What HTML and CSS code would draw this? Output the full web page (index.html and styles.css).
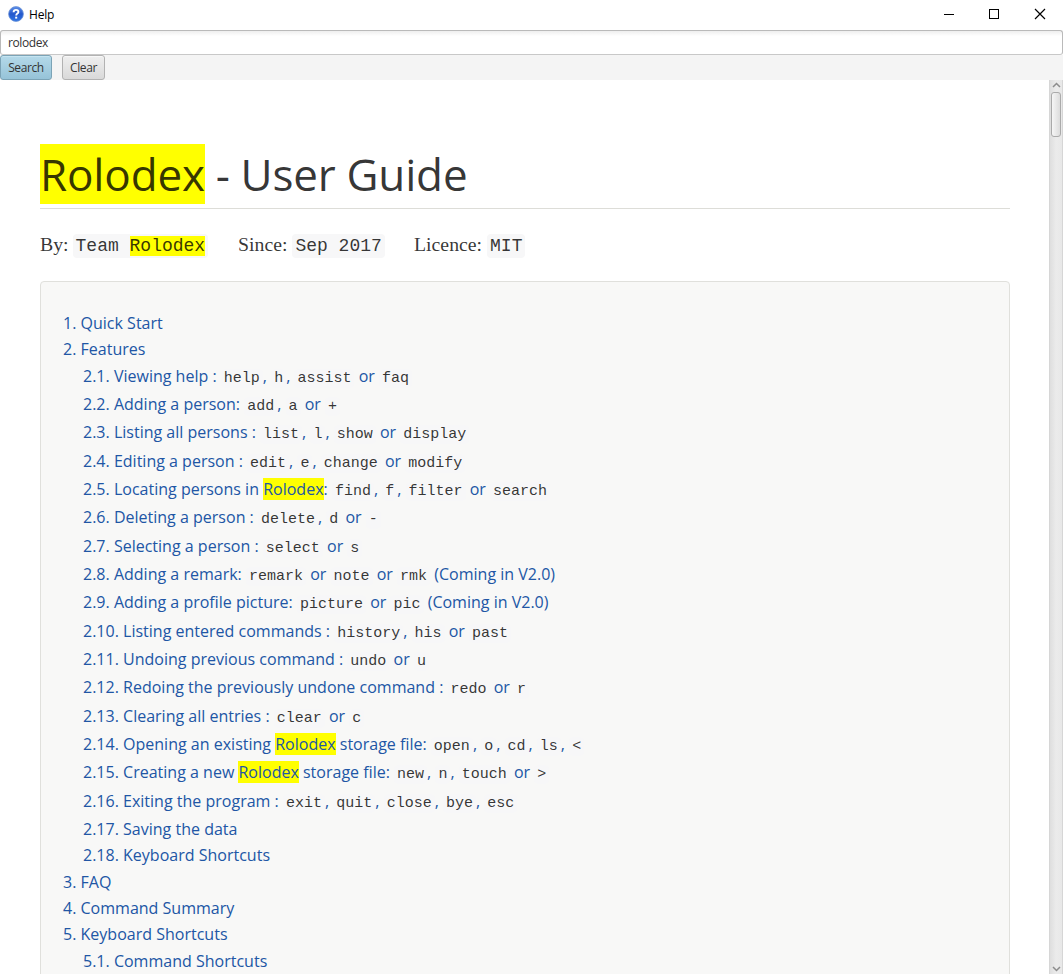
FILE: index.html
```html
<!DOCTYPE html>
<html lang="en">
<head>
<meta charset="utf-8">
<title>Help</title>
<link rel="stylesheet" href="styles.css">
</head>
<body>
<header class="titlebar">
  <svg class="help-icon" width="16" height="16" viewBox="0 0 16 16">
    <defs><linearGradient id="ball" x1="0" y1="0" x2="0" y2="1"><stop offset="0" stop-color="#5c8ee8"/><stop offset=".5" stop-color="#2458cc"/><stop offset="1" stop-color="#2e74e4"/></linearGradient></defs>
    <circle cx="8" cy="8" r="7.4" fill="url(#ball)" stroke="#6f94d6" stroke-width=".8"/>
    <path d="M5.6 6.2C5.7 4.6 6.7 3.900 8 3.900s2.400.8 2.400 2c0 1.600-2.200 1.700-2.200 3.500" fill="none" stroke="#fff" stroke-width="1.900"/>
    <rect x="7.200" y="10.700" width="2" height="1.900" fill="#fff"/>
  </svg>
  <span class="window-title">Help</span>
  <svg class="window-controls" width="104" height="12" viewBox="0 0 104 12" fill="none" stroke="#000">
    <path d="M1 6.500h10M46.500 1.500h9v9h-9z" shape-rendering="crispEdges"/>
    <path d="M92 1l10 10M102 1L92 11" stroke-width="1.200"/>
  </svg>
</header>
<div class="search-field">rolodex</div>
<div class="toolbar"><button class="btn primary">Search</button><button class="btn">Clear</button></div>
<div class="viewport">
  <main class="page">
    <h1><mark>Rolodex</mark> - User Guide</h1>
    <div class="meta">
      <span class="by">By: <code>Team <mark>Rolodex</mark></code></span>
      <span class="since">Since: <code>Sep 2017</code></span>
      <span>Licence: <code>MIT</code></span>
    </div>
    <nav class="toc">
      <ul>
        <li><a>1. Quick Start</a></li>
        <li><a>2. Features</a>
          <ul>
            <li class="cmd"><a>2.1. Viewing help : <code>help</code>, <code>h</code>, <code>assist</code> or <code>faq</code></a></li>
            <li class="cmd"><a>2.2. Adding a person: <code>add</code>, <code>a</code> or <code>+</code></a></li>
            <li class="cmd"><a>2.3. Listing all persons : <code>list</code>, <code>l</code>, <code>show</code> or <code>display</code></a></li>
            <li class="cmd"><a>2.4. Editing a person : <code>edit</code>, <code>e</code>, <code>change</code> or <code>modify</code></a></li>
            <li class="cmd"><a>2.5. Locating persons in <mark>Rolodex</mark>: <code>find</code>, <code>f</code>, <code>filter</code> or <code>search</code></a></li>
            <li class="cmd"><a>2.6. Deleting a person : <code>delete</code>, <code>d</code> or <code>-</code></a></li>
            <li class="cmd"><a>2.7. Selecting a person : <code>select</code> or <code>s</code></a></li>
            <li class="cmd"><a>2.8. Adding a remark: <code>remark</code> or <code>note</code> or <code>rmk</code> (Coming in V2.0)</a></li>
            <li class="cmd"><a>2.9. Adding a profile picture: <code>picture</code> or <code>pic</code> (Coming in V2.0)</a></li>
            <li class="cmd"><a>2.10. Listing entered commands : <code>history</code>, <code>his</code> or <code>past</code></a></li>
            <li class="cmd"><a>2.11. Undoing previous command : <code>undo</code> or <code>u</code></a></li>
            <li class="cmd"><a>2.12. Redoing the previously undone command : <code>redo</code> or <code>r</code></a></li>
            <li class="cmd"><a>2.13. Clearing all entries : <code>clear</code> or <code>c</code></a></li>
            <li class="cmd"><a>2.14. Opening an existing <mark>Rolodex</mark> storage file: <code>open</code>, <code>o</code>, <code>cd</code>, <code>ls</code>, <code>&lt;</code></a></li>
            <li class="cmd"><a>2.15. Creating a new <mark>Rolodex</mark> storage file: <code>new</code>, <code>n</code>, <code>touch</code> or <code>&gt;</code></a></li>
            <li class="cmd"><a>2.16. Exiting the program : <code>exit</code>, <code>quit</code>, <code>close</code>, <code>bye</code>, <code>esc</code></a></li>
            <li><a>2.17. Saving the data</a></li>
            <li><a>2.18. Keyboard Shortcuts</a></li>
          </ul>
        </li>
        <li><a>3. FAQ</a></li>
        <li><a>4. Command Summary</a></li>
        <li><a>5. Keyboard Shortcuts</a>
          <ul><li><a>5.1. Command Shortcuts</a></li></ul>
        </li>
      </ul>
    </nav>
  </main>
  <div class="scrollbar">
    <svg width="9" height="6" viewBox="0 0 9 6"><path d="M1 5l3.500-3.500L8 5" fill="none" stroke="#8c8c8c" stroke-width="1.500"/></svg>
    <div class="thumb"></div>
    <svg class="down" width="9" height="6" viewBox="0 0 9 6"><path d="M1 1l3.500 3.500L8 1" fill="none" stroke="#8c8c8c" stroke-width="1.500"/></svg>
  </div>
</div>
</body>
</html>
```
FILE: styles.css
```css
* { box-sizing: border-box; }
body { margin: 0; height: 974px; overflow: hidden; display: flex; flex-direction: column; background: #fff; font-family: "Open Sans", "Noto Sans", sans-serif; }
.titlebar { height: 30px; flex: none; display: flex; align-items: center; padding: 0 16px 2px 8px; }
.window-title { margin-left: 5px; font-size: 12px; letter-spacing: -.2px; line-height: 16px; color: #000; padding-top: 2px; }
.window-controls { margin-left: auto; }
.search-field { height: 25px; flex: none; border: 1px solid #bababa; border-bottom-color: #c8c8c8; border-radius: 3px; padding: 0 7px; font-size: 12px; letter-spacing: -.4px; line-height: 24px; color: #333; background: linear-gradient(#eee, #fff 5px); }
.toolbar { height: 25px; flex: none; display: flex; gap: 10px; background: #f4f4f4; }
.btn { height: 25px; width: 43px; padding: 0; border: 1px solid #b2b2b2; border-radius: 3px; background: linear-gradient(#efefef, #d9d9d9); box-shadow: inset 0 1px #f8f8f8; font: 12px "Open Sans", "Noto Sans", sans-serif; letter-spacing: -.4px; color: #333; }
.btn.primary { width: 52px; border-color: #7ba3b6; background: linear-gradient(#b4d9e9, #96c3d8); box-shadow: inset 0 1px #c5e4f1; }
.viewport { flex: 1; min-height: 0; display: flex; overflow: hidden; }
.page { flex: 1; padding: 64px 39px 0 40px; }
mark { background: #ff0; color: inherit; }
h1 { margin: 0; height: 65px; border-bottom: 1px solid #ddddd8; font-size: 44px; font-weight: 400; line-height: 60px; letter-spacing: -.140px; word-spacing: -.5px; color: rgba(0,0,0,.8); }
.meta { display: flex; height: 72px; padding-top: 22px; font: 19.800px/26px "Liberation Serif", serif; color: rgba(0,0,0,.8); white-space: pre; }
.meta code { margin-left: -1px; padding: 2px 3px; border-radius: 4px; background: #f7f7f8; font: 18px/20px "Liberation Mono", monospace; }
.by { width: 198px; }
.since { width: 176px; }
.since code, .since + span code { margin-left: 0; }
.toc { height: 1100px; border: 1px solid #e0e0dc; border-radius: 4px; background: #f8f8f7; padding: 28px 22px; font-size: 16.020px; color: #2156a5; }
.toc ul { list-style: none; margin: 0; padding: 0; }
.toc ul ul { padding-left: 20px; }
.toc a { display: block; height: 26.350px; line-height: 26.350px; white-space: nowrap; }
.toc .cmd a { height: 28.330px; }
.toc code { padding: 1px 3px; border-radius: 4px; background: #f7f7f8; font: 15px/15px "Liberation Mono", monospace; color: rgba(0,0,0,.8); }
.scrollbar { width: 14px; flex: none; display: flex; flex-direction: column; align-items: center; border-left: 1px solid #d6d6d6; border-right: 1px solid #d6d6d6; background: linear-gradient(90deg, #dedede, #ebebeb 50%, #e8e8e8); padding: 2px 0; }
.thumb { width: 10px; height: 45px; margin-top: 4px; border: 1px solid #aaa; border-radius: 3px; background: linear-gradient(90deg, #f6f6f6, #dcdcdc); }
.down { margin-top: auto; }
```
